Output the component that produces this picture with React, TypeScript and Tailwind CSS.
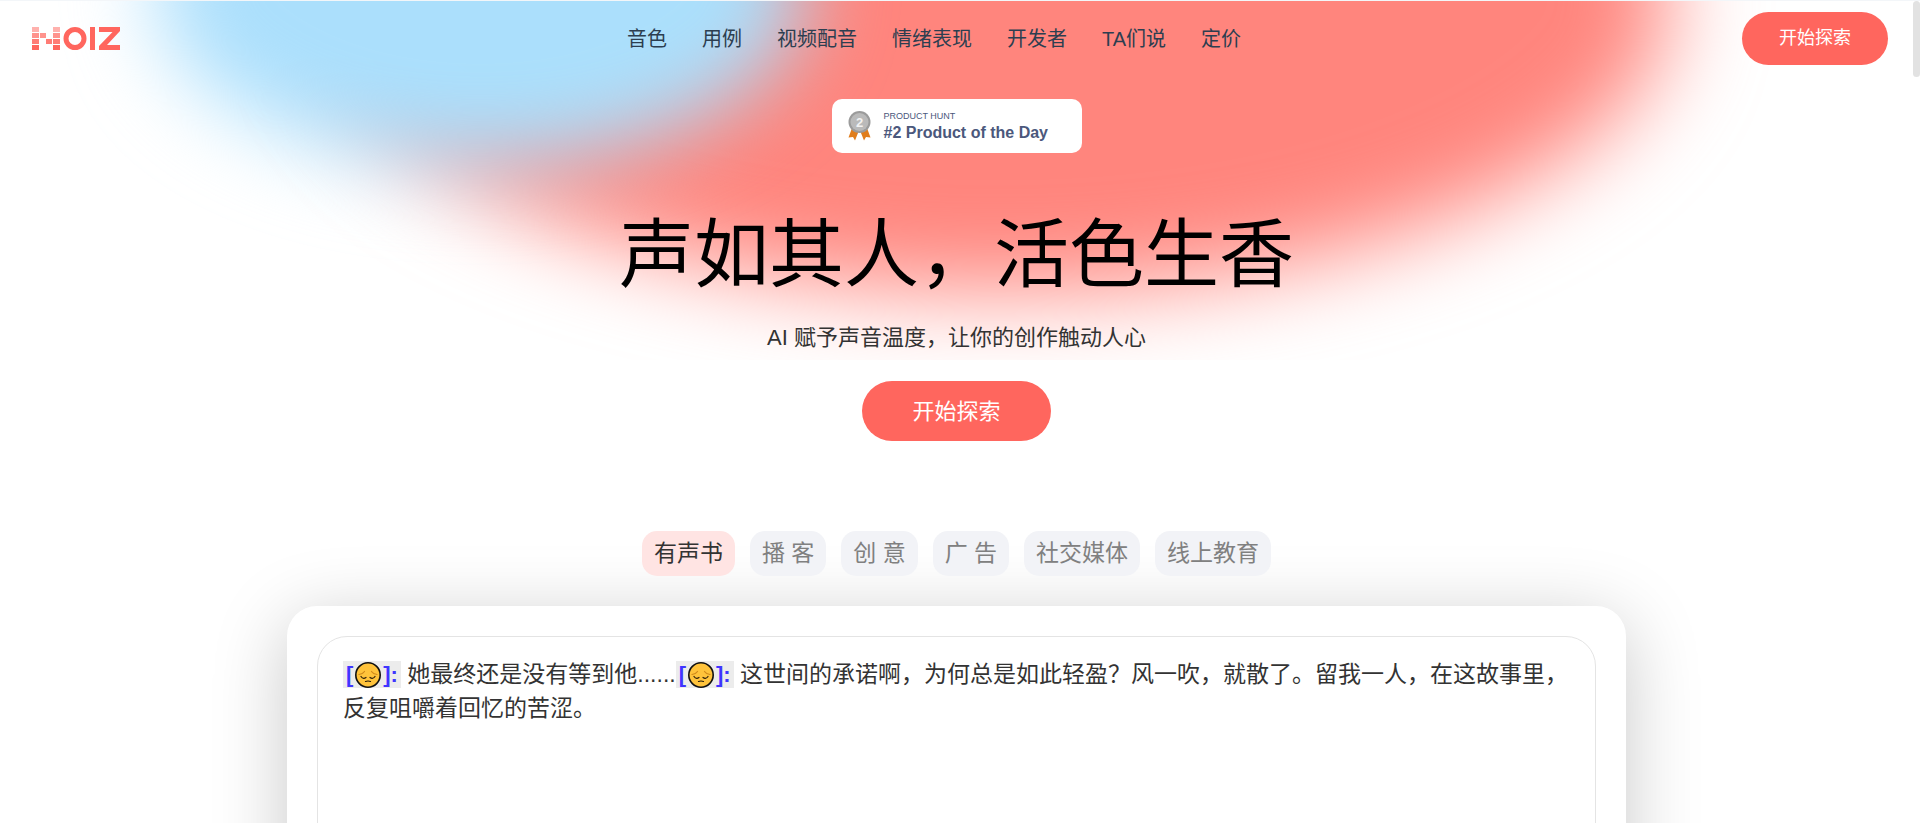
const navItems = ["音色", "用例", "视频配音", "情绪表现", "开发者", "TA们说", "定价"];

const tabs = ["有声书", "播 客", "创 意", "广 告", "社交媒体", "线上教育"];

export default function App() {
  return (
    <div className="relative h-screen overflow-hidden bg-white font-['Liberation_Sans','Noto_Sans_CJK_SC',sans-serif] text-[#333]">
      <Backdrop />
      <Header />
      <main className="relative flex flex-col items-center pr-[7px]">
        <ProductHuntBadge />
        <h1 className="mt-[55px] text-[75px] leading-[94px] text-black">声如其人，活色生香</h1>
        <p className="mt-[19px] text-[22px] leading-[34px]">AI 赋予声音温度，让你的创作触动人心</p>
        <button type="button" className="mt-[26px] h-[60px] rounded-full bg-[#ff665e] px-[50px] text-[22px] text-white">
          开始探索
        </button>
        <div role="tablist" className="relative z-10 mt-[90px] flex gap-[15px]">
          {tabs.map((t, i) => (
            <button
              key={t}
              type="button"
              role="tab"
              aria-selected={i === 0}
              className={
                i === 0
                  ? "h-[45px] rounded-[15px] bg-[#ffe4e3] px-3 text-[23px] text-[#333]"
                  : "h-[45px] rounded-[15px] bg-[#f2f3f7] px-3 text-[23px] text-[#808080]"
              }
            >
              {t}
            </button>
          ))}
        </div>
        <ScriptPanel />
      </main>
      <div className="absolute top-px right-0 h-[76px] w-[7px] rounded-full bg-[#e2e2e2]" />
    </div>
  );
}

// Two blurred ellipses behind the header and hero
function Backdrop() {
  return (
    <div className="absolute inset-x-0 top-0 h-[360px] overflow-hidden border-t border-[#f3f6f9]">
      <div className="absolute top-[-290px] left-[17%] h-[580px] w-[70%] rounded-[50%] bg-[#ff857d] blur-[46px]" />
      <div className="absolute top-[-190px] left-[8%] h-[355px] w-[34%] rounded-[50%] bg-[#abdffc] blur-[42px]" />
    </div>
  );
}

function Header() {
  return (
    <header className="relative flex h-[77px] items-center justify-between px-8">
      <a href="#" aria-label="NOIZ" className="w-[94px]">
        <Logo />
      </a>
      <nav className="flex gap-[35px] text-[20px] text-[#2c3e50]">
        {navItems.map((n) => (
          <a key={n} href="#">{n}</a>
        ))}
      </nav>
      <button type="button" className="h-[53px] rounded-full bg-[#ff665e] px-[37px] text-[18px] text-white">
        开始探索
      </button>
    </header>
  );
}

function Logo() {
  return (
    <svg width="89" height="24" viewBox="0 0 89 24" fill="#ff665e">
      <g opacity="0.5">
        <rect x="0" y="0" width="7" height="5" />
        <rect x="21" y="0" width="7" height="5" />
      </g>
      <g opacity="0.7">
        <rect x="0" y="6" width="7" height="5" />
        <rect x="8" y="6" width="6" height="5" />
        <rect x="21" y="6" width="7" height="5" />
      </g>
      <g opacity="0.85">
        <rect x="0" y="12" width="7" height="5" />
        <rect x="14" y="12" width="6" height="5" />
        <rect x="21" y="12" width="7" height="5" />
      </g>
      <rect x="0" y="18" width="7" height="5" />
      <rect x="21" y="18" width="7" height="5" />
      <circle cx="43" cy="11.5" r="9" fill="none" stroke="#ff665e" strokeWidth="5" />
      <rect x="58" y="0" width="5" height="23" />
      <path d="M67 0h21v4L75 18h13v5H67v-4L80.500 5H67z" />
    </svg>
  );
}

function ProductHuntBadge() {
  return (
    <a href="#" className="mt-[22px] flex h-[54px] w-[250px] items-center rounded-[10px] bg-white pl-4 text-[#4b587c]">
      <svg width="23" height="30" viewBox="0 0 23 30" className="mr-[13px]">
        <path d="M4 17L0.500 26.500l4.500-.5 2 3.500 4-10z M19 17l3.500 9.500-4.500-.5-2 3.500-4-10z" fill="#e07d1c" />
        <circle cx="11.500" cy="11" r="11" fill="#9b9b9b" />
        <circle cx="11.500" cy="11" r="9" fill="#bababa" />
        <text x="11.500" y="15.500" textAnchor="middle" fontSize="13" fontWeight="700" fill="#f2f2f2">2</text>
      </svg>
      <span className="flex flex-col">
        <span className="text-[9px] leading-[14px]">PRODUCT HUNT</span>
        <span className="text-[16px] leading-[20px] font-bold">#2 Product of the Day</span>
      </span>
    </a>
  );
}

function ScriptPanel() {
  return (
    <section className="mt-[30px] w-[70%] rounded-[30px] bg-white p-[30px] shadow-[0_15px_75px_rgba(0,0,0,0.22)]">
      <div className="h-80 rounded-[30px] border border-[#e4e4e4] px-[25px] pt-5 text-[23px] leading-[34px]">
        <Emotion /> 她最终还是没有等到他......
        <Emotion /> 这世间的承诺啊，为何总是如此轻盈？风一吹，就散了。留我一人，在这故事里，反复咀嚼着回忆的苦涩。
      </div>
    </section>
  );
}

function Emotion() {
  return (
    <span className="inline-block h-[27px] bg-[#ececec] px-[3px] text-[22px] leading-[27px] font-bold text-[#3f35ff]">
      [
      <svg width="26" height="26" viewBox="0 0 26 26" className="mx-[2px] inline-block align-[-6px]" fill="none" strokeLinecap="round">
        <circle cx="13" cy="13" r="12.200" fill="#ffc33b" stroke="#111" strokeWidth="1.600" />
        <path d="M4 12.500q4-.5 5.500-3M22 12.500q-4-.5-5.500-3" stroke="#d18a1b" strokeWidth="1.200" />
        <path d="M6 14.500q2 3 5 1M20 14.500q-2 3-5 1M10.500 19.500q2.500-1 5 0" stroke="#2a1c08" strokeWidth="1.200" />
      </svg>
      ]:
    </span>
  );
}
